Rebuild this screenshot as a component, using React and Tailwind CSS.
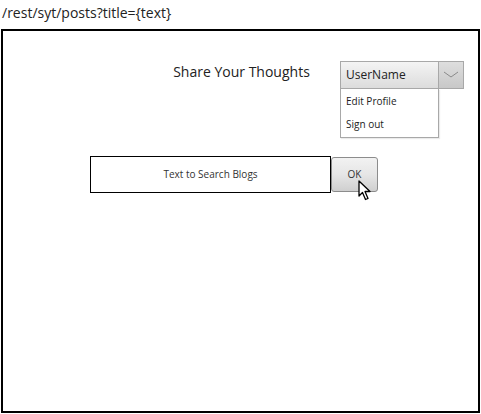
import { useState } from "react";

const font = { fontFamily: '"Open Sans", "Noto Sans", sans-serif' };

function Cursor() {
  return (
    <svg width="16" height="22" viewBox="0 0 16 22" className="absolute left-[27px] top-[24px]">
      <path
        d="M1 1 L1 16 L4.5 12.5 L7.5 19.5 L10 18.5 L7 11.5 L12 11.5 Z"
        fill="#fff"
        stroke="#000"
        strokeWidth="1.3"
        strokeLinejoin="round"
      />
    </svg>
  );
}

export default function App() {
  const [query, setQuery] = useState("");

  return (
    <div className="w-[481px] h-[414px] bg-white text-[#222] flex flex-col" style={font}>
      <div className="h-[29px] pl-[2px] pt-[3px] text-[14px] leading-[20px]">/rest/syt/posts?title={"{text}"}</div>

      <div className="relative ml-[1px] w-[479px] h-[384px] border-2 border-black">
        <div className="flex">
          <div className="w-[476px] pt-[31px] flex justify-center">
            <h1 className="text-[14px] leading-[20px] ml-[2px]">Share Your Thoughts</h1>
          </div>
        </div>

        {/* user menu */}
        <div className="absolute left-[337px] top-[30px] w-[124px]">
          <div className="flex h-[28px]">
            <div className="w-[99px] border border-[#a8a8a8] bg-gradient-to-b from-[#f4f4f4] to-[#dcdcdc] flex items-center pl-[5px] text-[12px]">
              UserName
            </div>
            <button className="w-[25px] border border-[#a8a8a8] border-l-0 bg-gradient-to-b from-[#dedede] to-[#c8c8c8] flex items-center justify-center">
              <svg width="16" height="8" viewBox="0 0 16 8">
                <path d="M1 1 L8 6 L15 1" fill="none" stroke="#8a8a8a" strokeWidth="1" />
              </svg>
            </button>
          </div>
          <div className="w-[99px] border border-t-0 border-[#a8a8a8] bg-white text-[10px] pl-[5px] pt-[4px] pb-[5px] flex flex-col gap-[7px] shadow-[1px_1px_1px_rgba(0,0,0,0.08)]">
            <span className="leading-[16px]">Edit Profile</span>
            <span className="leading-[16px]">Sign out</span>
          </div>
        </div>

        {/* search */}
        <div className="flex mt-[74px] ml-[87px]">
          <div className="relative w-[241px] h-[37px] border-[1.5px] border-black flex items-center justify-center">
            <input
              value={query}
              onChange={(e) => setQuery(e.target.value)}
              placeholder="Text to Search Blogs"
              className="w-full text-center text-[10px] outline-none placeholder:text-[#333] bg-transparent"
              style={font}
            />
          </div>
          <div className="relative">
            <button className="w-[47px] h-[35px] mt-[1px] rounded-[3px] border border-[#8c8c8c] bg-gradient-to-b from-[#f2f2f2] via-[#e6e6e6] to-[#cfcfcf] text-[10px] text-[#333] flex items-center justify-center">
              OK
            </button>
            <Cursor />
          </div>
        </div>
      </div>
    </div>
  );
}
